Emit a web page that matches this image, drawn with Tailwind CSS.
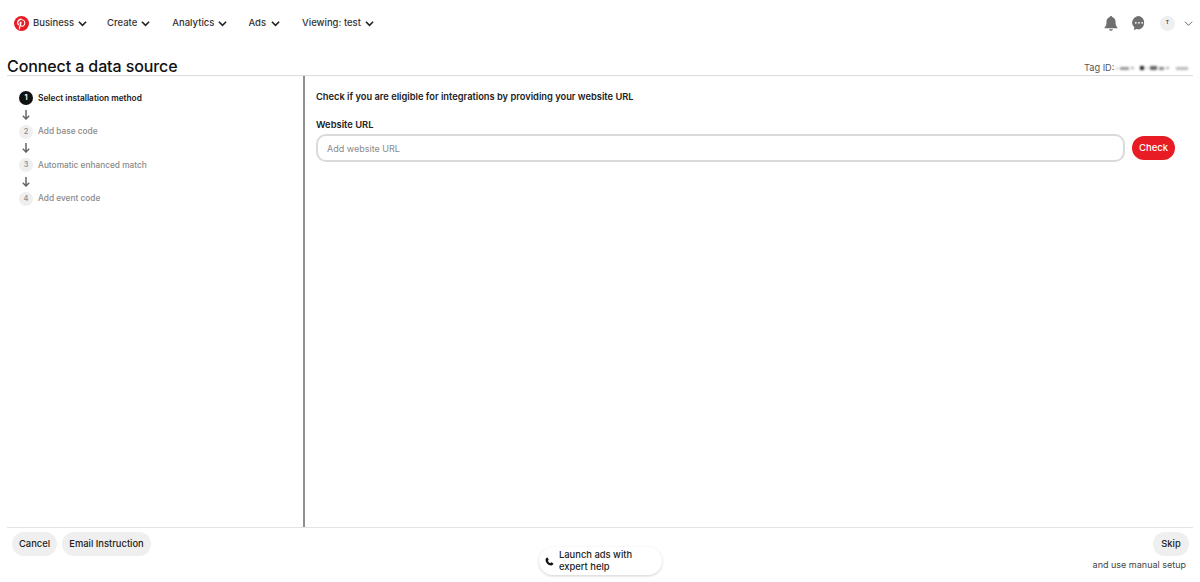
<!DOCTYPE html>
<html lang="en">
<head>
    <meta charset="UTF-8" />
    <title>Connect a data source</title>
    <script src="https://cdn.jsdelivr.net/npm/@tailwindcss/browser@4"></script>
</head>
<body class="bg-white text-[#111] font-['Inter',sans-serif] h-[582px] w-[1200px] overflow-hidden flex flex-col">
    <!-- navbar -->
    <header class="h-[45px] flex items-center pt-[1px] pl-[14px] pr-[7px] text-[#333] text-[9.5px] font-medium shrink-0">
        <svg class="w-[15px] h-[15px] mr-[4px]" viewBox="0 0 24 24"><circle cx="12" cy="12" r="12" fill="#e81c24"/><path transform="translate(-2 -1.300) scale(1.170)" fill="#fff" d="M12.200 4.600c-4.100 0-6.300 2.700-6.300 5.700 0 1.400.8 3.100 2 3.700.2.100.3 0 .3-.1l.3-1.100c0-.1 0-.2-.1-.3-.4-.5-.8-1.300-.8-2.100 0-2 1.500-3.900 4.200-3.900 2.300 0 3.900 1.500 3.900 3.700 0 2.500-1.300 4.200-2.900 4.200-.9 0-1.600-.7-1.400-1.600.3-1.100.8-2.200.8-3 0-.7-.4-1.300-1.200-1.300-.9 0-1.700 1-1.700 2.200 0 .8.300 1.300.3 1.300l-1.100 4.600c-.2 1-.1 2.300 0 3.200l.3.100c.5-.8 1.200-2.100 1.500-3l.5-2.100c.3.500 1.100 1 2 1 2.600 0 4.500-2.400 4.500-5.400 0-2.800-2.500-4.900-5.600-4.900z"/></svg>
        <a class="flex items-center">Business<svg class="w-[9px] h-[9px] ml-[4px]" viewBox="0 0 10 10" fill="none" stroke="#222" stroke-width="1.800"><path d="M1 3l4 4 4-4"/></svg></a>
        <a class="flex items-center ml-[20px]">Create<svg class="w-[9px] h-[9px] ml-[4px]" viewBox="0 0 10 10" fill="none" stroke="#222" stroke-width="1.800"><path d="M1 3l4 4 4-4"/></svg></a>
        <a class="flex items-center ml-[22px]">Analytics<svg class="w-[9px] h-[9px] ml-[4px]" viewBox="0 0 10 10" fill="none" stroke="#222" stroke-width="1.800"><path d="M1 3l4 4 4-4"/></svg></a>
        <a class="flex items-center ml-[21px]">Ads<svg class="w-[9px] h-[9px] ml-[5px]" viewBox="0 0 10 10" fill="none" stroke="#222" stroke-width="1.800"><path d="M1 3l4 4 4-4"/></svg></a>
        <a class="flex items-center ml-[22px]">Viewing: test<svg class="w-[9px] h-[9px] ml-[4px]" viewBox="0 0 10 10" fill="none" stroke="#222" stroke-width="1.800"><path d="M1 3l4 4 4-4"/></svg></a>
        <div class="ml-auto flex items-center">
            <svg class="w-[14px] h-[15px]" viewBox="0 0 14 15" fill="#6f6f6f"><path d="M7 0c.7 0 1.200.5 1.200 1.100C10.300 1.700 11.500 3.400 11.500 5.500c0 3.500.6 4.800 2 6v.8H.5v-.8c1.400-1.200 2-2.500 2-6 0-2.100 1.200-3.800 3.300-4.400C5.800.5 6.300 0 7 0zM5 13.200h4c0 .9-.9 1.500-2 1.500s-2-.6-2-1.500z"/></svg>
            <svg class="w-[14px] h-[14px] ml-[14px]" viewBox="0 0 14 14"><path fill="#6f6f6f" d="M7 0a7 7 0 0 1 0 13.500c-.8 0-1.500-.1-2.200-.4L1.800 14l.5-2.700A6.700 6.700 0 0 1 0 6.700 7 7 0 0 1 7 0z"/><circle cx="3.800" cy="6.800" r=".9" fill="#fff"/><circle cx="7" cy="6.800" r=".9" fill="#fff"/><circle cx="10.200" cy="6.800" r=".9" fill="#fff"/></svg>
            <div class="w-[15px] h-[15px] ml-[14px] rounded-full bg-[#efefef] flex items-center justify-center text-[5px] font-semibold text-[#333]">T</div>
            <svg class="w-[9px] h-[9px] ml-[9px]" viewBox="0 0 10 10" fill="none" stroke="#666" stroke-width="1.100"><path d="M1 3l4 4 4-4"/></svg>
        </div>
    </header>

    <!-- title row -->
    <div class="mx-[7px] h-[31px] border-b border-[#dcdcdc] flex items-end justify-between shrink-0">
        <h1 class="text-[16px] leading-[16px] pb-[1px] font-medium tracking-[-0.1px]">Connect a data source</h1>
        <div class="flex items-center text-[9.2px] leading-[12px] text-[#555] pb-[1px] w-[109px] overflow-visible whitespace-nowrap">
            <span>Tag ID:</span>
            <span class="flex items-center ml-[2px] gap-[2px] blur-[1px]">
                <i class="w-[2px] h-[1px] bg-[#999]"></i><i class="w-[9px] h-[3px] bg-[#999]"></i><i class="w-[3px] h-[2px] bg-[#aaa] mr-[4px]"></i><i class="w-[4px] h-[4px] bg-[#222]"></i><i class="w-[2px] h-[2px] bg-[#ccc]"></i><i class="w-[7px] h-[4px] bg-[#666]"></i><i class="w-[5px] h-[3px] bg-[#888]"></i><i class="w-[3px] h-[2px] bg-[#aaa] mr-[5px]"></i><i class="w-[12px] h-[3px] bg-[#bbb]"></i>
            </span>
        </div>
    </div>

    <!-- main -->
    <main class="mx-[7px] flex-1 flex min-h-0">
        <aside class="w-[298px] shrink-0 border-r-2 border-[#8f8f8f] pl-[12px] pt-[15px] text-[8.3px] font-medium text-[#8a8a8a]">
            <div class="flex items-center h-[14px] text-[#222] font-semibold">
                <span class="w-[14px] h-[14px] rounded-full bg-[#111] text-white flex items-center justify-center text-[7.500px]">1</span>
                <span class="ml-[5px]">Select installation method</span>
            </div>
            <svg class="w-[8px] h-[10px] ml-[3px] my-[4.750px] block" viewBox="0 0 8 10" fill="none" stroke="#666" stroke-width="1.500"><path d="M4 0v9M.8 5.800 4 9l3.200-3.200"/></svg>
            <div class="flex items-center h-[14px]">
                <span class="w-[14px] h-[14px] rounded-full bg-[#efefef] flex items-center justify-center text-[7.500px]">2</span>
                <span class="ml-[5px]">Add base code</span>
            </div>
            <svg class="w-[8px] h-[10px] ml-[3px] my-[4.750px] block" viewBox="0 0 8 10" fill="none" stroke="#666" stroke-width="1.500"><path d="M4 0v9M.8 5.800 4 9l3.200-3.200"/></svg>
            <div class="flex items-center h-[14px]">
                <span class="w-[14px] h-[14px] rounded-full bg-[#efefef] flex items-center justify-center text-[7.500px]">3</span>
                <span class="ml-[5px]">Automatic enhanced match</span>
            </div>
            <svg class="w-[8px] h-[10px] ml-[3px] my-[4.750px] block" viewBox="0 0 8 10" fill="none" stroke="#666" stroke-width="1.500"><path d="M4 0v9M.8 5.800 4 9l3.200-3.200"/></svg>
            <div class="flex items-center h-[14px]">
                <span class="w-[14px] h-[14px] rounded-full bg-[#efefef] flex items-center justify-center text-[7.500px]">4</span>
                <span class="ml-[5px]">Add event code</span>
            </div>
        </aside>
        <section class="flex-1 pl-[11px] pt-[14px] pr-[18px]">
            <p class="text-[9.300px] leading-[13px] font-semibold text-[#222]">Check if you are eligible for integrations by providing your website URL</p>
            <label class="block mt-[15px] text-[9.400px] leading-[13px] font-semibold text-[#222]">Website URL</label>
            <div class="flex items-center mt-[3px]">
                <input class="w-[809px] h-[28px] border-2 border-[#dadada] rounded-[10px] px-[9px] text-[9px] placeholder:text-[#8a8a8a]" placeholder="Add website URL" />
                <button class="ml-[7px] w-[43px] h-[24px] rounded-full bg-[#e81c24] text-white text-[9.500px] font-medium">Check</button>
            </div>
        </section>
    </main>

    <!-- footer -->
    <footer class="relative mx-[7px] h-[55px] border-t border-[#e3e3e3] shrink-0 flex justify-between text-[9.400px] font-medium text-[#222]">
        <div class="flex items-start pl-[5px] pt-[4px] gap-[5px]">
            <button class="h-[24px] w-[45px] rounded-full bg-[#efefef]">Cancel</button>
            <button class="h-[24px] w-[89px] rounded-full bg-[#efefef]">Email Instruction</button>
        </div>
        <div class="flex flex-col items-end pt-[4px] pr-[4px]">
            <button class="h-[24px] w-[36px] rounded-full bg-[#efefef]">Skip</button>
            <span class="mt-[2px] mr-[3px] text-[#444] text-[9px] leading-[13px] font-normal">and use manual setup</span>
        </div>
        <div class="absolute left-[532px] top-[19px] w-[123px] h-[28px] rounded-full bg-white shadow-[0_1px_3px_rgba(0,0,0,0.18)] flex items-center pl-[6px] text-[9.400px] leading-[12px]">
            <svg class="w-[9px] h-[9px] shrink-0" viewBox="0 0 24 24" fill="#111"><path d="M6.600 1.500 10 7.200 7.600 10c1.200 2.700 3.600 5.100 6.400 6.400l2.800-2.400 5.700 3.400c-.4 2.900-2.800 5.100-5.800 5.100C8.800 22.500 1.500 15.200 1.500 7.300c0-3 2.200-5.400 5.100-5.800z"/></svg>
            <span class="ml-[5px]">Launch ads with<br />expert help</span>
        </div>
    </footer>
</body>
</html>
